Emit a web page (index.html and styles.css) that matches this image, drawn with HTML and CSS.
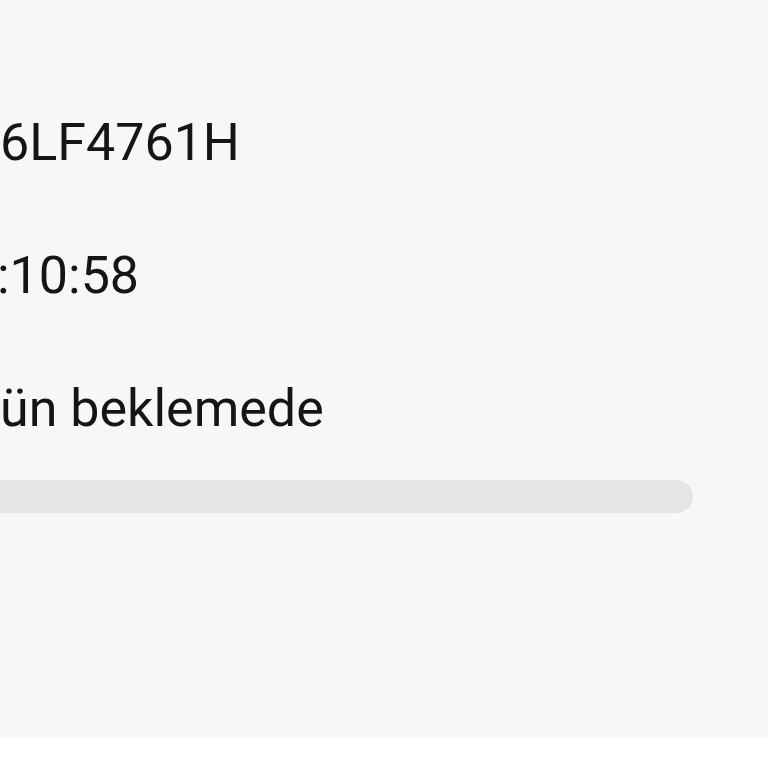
FILE: index.html
```html
<!DOCTYPE html>
<html lang="tr">
<head>
    <meta charset="UTF-8">
    <meta name="viewport" content="width=device-width, initial-scale=1.0">
    <title>Sipariş Durumu</title>
    <link rel="stylesheet" href="styles.css">
</head>
<body>
    <div class="screen">
        <!-- Order details -->
        <div class="details">
            <div class="row code">6LF4761H</div>
            <div class="row time">:10:58</div>
            <div class="row status">ün beklemede</div>
        </div>

        <!-- Progress track -->
        <div class="progress">
            <div class="progress-track"></div>
        </div>
    </div>
    <div class="footer"></div>
</body>
</html>
```

FILE: styles.css
```css
body {
    margin: 0;
    padding: 0;
    background-color: #fff;
    font-family: Roboto, "Noto Sans", sans-serif;
    color: #151515;
}

.screen {
    height: 738px;
    background-color: #f7f7f7;
    overflow: hidden;
    padding-top: 112px;
    box-sizing: border-box;
}

.details {
    display: flex;
    flex-direction: column;
    gap: 72px;
}

.row {
    font-size: 52px;
    line-height: 61px;
    white-space: nowrap;
}

.time {
    margin-left: -3px;
}

.progress {
    margin-top: 41px;
    margin-left: -24px;
}

.progress-track {
    width: 717px;
    height: 33px;
    border-radius: 17px;
    background-color: #e5e5e5;
}

.footer {
    height: 30px;
    background-color: #fff;
}
```
